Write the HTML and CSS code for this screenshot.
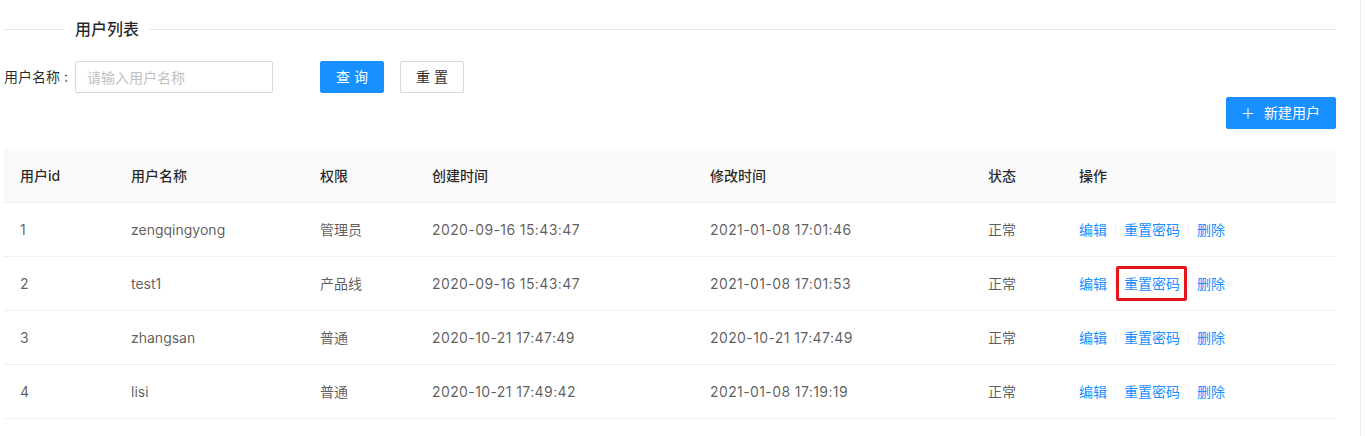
FILE: index.html
```html
<!DOCTYPE html>
<html lang="zh-CN">
<head>
<meta charset="utf-8">
<title>用户列表</title>
<link rel="stylesheet" href="styles.css">
</head>
<body>
<div class="frame">
  <div class="page">
    <div class="divider-title">
      <span class="line line-left"></span>
      <span class="title">用户列表</span>
      <span class="line line-right"></span>
    </div>

    <div class="search">
      <label class="field-label">用户名称<span class="colon">:</span></label>
      <input class="input" type="text" placeholder="请输入用户名称">
      <button class="btn btn-primary btn-query">查 询</button>
      <button class="btn btn-default">重 置</button>
    </div>

    <div class="toolbar">
      <button class="btn btn-primary btn-new">
        <svg class="plus" viewBox="0 0 14 14" width="13" height="13"><path d="M7 1v12M1 7h12" stroke="currentColor" stroke-width="1.2" fill="none"/></svg>
        <span>新建用户</span>
      </button>
    </div>

    <table class="table">
      <colgroup>
        <col class="c1"><col class="c2"><col class="c3"><col class="c4"><col class="c5"><col class="c6"><col class="c7">
      </colgroup>
      <thead>
        <tr><th>用户id</th><th>用户名称</th><th>权限</th><th>创建时间</th><th>修改时间</th><th>状态</th><th>操作</th></tr>
      </thead>
      <tbody>
        <tr>
          <td>1</td><td>zengqingyong</td><td>管理员</td><td class="date">2020-09-16 15:43:47</td><td class="date">2021-01-08 17:01:46</td><td>正常</td>
          <td class="actions"><a>编辑</a><i class="sep"></i><a>重置密码</a><i class="sep"></i><a>删除</a></td>
        </tr>
        <tr>
          <td>2</td><td>test1</td><td>产品线</td><td class="date">2020-09-16 15:43:47</td><td class="date">2021-01-08 17:01:53</td><td>正常</td>
          <td class="actions"><a>编辑</a><i class="sep"></i><a class="marked">重置密码</a><i class="sep"></i><a>删除</a></td>
        </tr>
        <tr>
          <td>3</td><td>zhangsan</td><td>普通</td><td class="date">2020-10-21 17:47:49</td><td class="date">2020-10-21 17:47:49</td><td>正常</td>
          <td class="actions"><a>编辑</a><i class="sep"></i><a>重置密码</a><i class="sep"></i><a>删除</a></td>
        </tr>
        <tr>
          <td>4</td><td>lisi</td><td>普通</td><td class="date">2020-10-21 17:49:42</td><td class="date">2021-01-08 17:19:19</td><td>正常</td>
          <td class="actions"><a>编辑</a><i class="sep"></i><a>重置密码</a><i class="sep"></i><a>删除</a></td>
        </tr>
      </tbody>
    </table>
  </div>
</div>
</body>
</html>
```
FILE: styles.css
```css
* { box-sizing: border-box; }
html, body { margin: 0; padding: 0; background: #fff; }
body {
  font-family: "Inter", "Noto Sans CJK SC", sans-serif;
  font-size: 14px;
  color: rgba(0,0,0,0.65);
  line-height: 22px;
}
.frame {
  width: 1361px;
  min-height: 436px;
  border-right: 1px solid #ebebeb;
}
.page {
  padding: 17px 24px 0 4px;
}
.divider-title {
  display: flex;
  align-items: center;
  height: 24px;
}
.line { height: 1px; background: #e8e8e8; }
.line-left { width: 60px; }
.line-right { flex: 1; }
.title {
  font-size: 16px;
  font-weight: 500;
  color: rgba(0,0,0,0.85);
  padding: 0 10px 0 11px;
  line-height: 24px;
}
.search {
  display: flex;
  align-items: center;
  margin-top: 20px;
  height: 32px;
}
.field-label {
  color: rgba(0,0,0,0.85);
  display: inline-flex;
  width: 71px;
}
.colon { margin: 0 0 0 4px; }
.input {
  width: 198px;
  height: 32px;
  border: 1px solid #d9d9d9;
  border-radius: 2px;
  padding: 4px 11px;
  font: inherit;
  color: rgba(0,0,0,0.85);
  outline: none;
}
.input::placeholder { color: #bfbfbf; }
.btn {
  height: 32px;
  padding: 4px 15px;
  border-radius: 2px;
  font: inherit;
  font-size: 14px;
  cursor: pointer;
  display: inline-flex;
  align-items: center;
  justify-content: center;
  white-space: pre;
}
.btn-primary {
  background: #1890ff;
  border: 1px solid #1890ff;
  color: #fff;
}
.btn-default {
  background: #fff;
  border: 1px solid #d9d9d9;
  color: rgba(0,0,0,0.85);
  margin-left: 16px;
  width: 64px;
}
.btn-query { margin-left: 47px; width: 64px; }
.toolbar {
  display: flex;
  justify-content: flex-end;
  margin-top: 4px;
}
.btn-new { width: 110px; padding: 4px 15px; }
.plus { margin-right: 10px; }
.table {
  margin-top: 20px;
  width: 1332px;
  border-collapse: separate;
  border-spacing: 0;
  table-layout: fixed;
}
.c1 { width: 111px; }
.c2 { width: 189px; }
.c3 { width: 112px; }
.c4 { width: 278px; }
.c5 { width: 278px; }
.c6 { width: 91px; }
.c7 { width: 273px; }
th, td {
  text-align: left;
  padding: 16px 16px 15px;
  border-bottom: 1px solid #f0f0f0;
  white-space: nowrap;
  line-height: 22px;
  height: 54px;
}
th {
  background: #fafafa;
  color: rgba(0,0,0,0.85);
  font-weight: 500;
}
td { color: rgba(0,0,0,0.65); }
td.date { letter-spacing: 0.4px; }
.actions a { color: #1890ff; cursor: pointer; }
.sep {
  display: inline-block;
  width: 1px;
  height: 0.9em;
  background: #f0f0f0;
  margin: 0 8px;
  vertical-align: middle;
  position: relative;
  top: -1px;
}
.marked { position: relative; display: inline-block; vertical-align: top; }
.marked::after {
  content: "";
  position: absolute;
  left: -8px;
  right: -7px;
  top: -7px;
  bottom: -6px;
  border: 3px solid #e5141b;
  border-radius: 2px;
}
```
